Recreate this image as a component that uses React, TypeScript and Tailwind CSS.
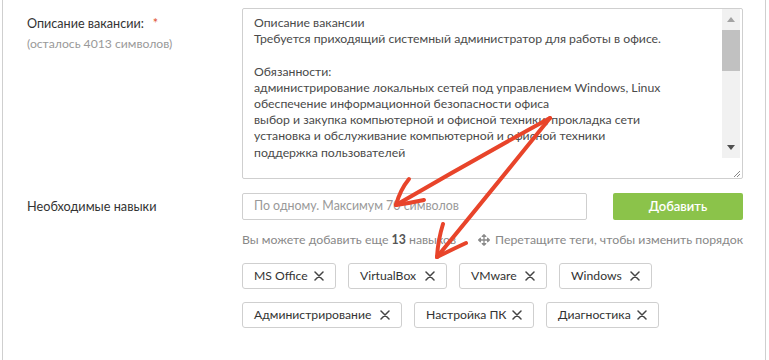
import React from "react";
import { FaArrowsAlt } from "react-icons/fa";

const font = { fontFamily: "Lato, 'Noto Sans', sans-serif" };

function XIcon() {
  return (
    <svg width="10" height="10" viewBox="0 0 10 10" className="shrink-0">
      <path d="M1 1 L9 9 M9 1 L1 9" stroke="#444" strokeWidth="1.5" strokeLinecap="round" />
    </svg>
  );
}

function Tag({ label, w }: { label: string; w: string }) {
  return (
    <div className={`h-[26px] ${w} border border-[#cfcfcf] rounded-[3px] flex items-center justify-between pl-[11px] pr-[11px] text-[12.2px] text-[#333] whitespace-nowrap`}>
      <span>{label}</span>
      <XIcon />
    </div>
  );
}

const lines = [
  "Описание вакансии",
  "Требуется приходящий системный администратор для работы в офисе.",
  "",
  "Обязанности:",
  "администрирование локальных сетей под управлением Windows, Linux",
  "обеспечение информационной безопасности офиса",
  "выбор и закупка компьютерной и офисной техники, прокладка сети",
  "установка и обслуживание компьютерной и офисной техники",
  "поддержка пользователей",
];

export default function App() {
  return (
    <div className="relative w-[769px] h-[360px] bg-white overflow-hidden" style={font}>
      <div className="ml-[2px] w-[764px] h-[360px] border-l border-r border-[#cfcfcf] pl-[24px] pr-[21px] pt-[8px]">
        {/* Row 1 */}
        <div className="flex">
          <div className="w-[215px] pt-[7px]">
            <div className="text-[12.6px] leading-[18px] text-[#333] whitespace-nowrap">
              Описание вакансии:<span className="ml-[9px] text-[#e0502a]">*</span>
            </div>
            <div className="mt-[2px] text-[12.2px] leading-[18px] text-[#999] whitespace-nowrap">(осталось 4013 символов)</div>
          </div>
          <div className="w-[501px] h-[171px] border border-[#cfcfcf] rounded-[2px] flex overflow-hidden">
            <div className="flex-1 pl-[11px] pt-[6px] text-[12.25px] leading-[16.2px] text-[#4a4a4a] overflow-hidden">
              {lines.map((l, i) => (
                <div key={i} className="whitespace-nowrap h-[16.2px]">{l}</div>
              ))}
            </div>
            <div className="w-[18px] mr-[2px] flex flex-col">
              <div className="h-[149px] bg-[#f1f1f1] flex flex-col">
                <div className="h-[21px] flex items-center justify-center">
                  <svg width="8" height="5" viewBox="0 0 8 5"><path d="M0 5 L4 0 L8 5 Z" fill="#a3a3a3" /></svg>
                </div>
                <div className="h-[41px] bg-[#c1c1c1]" />
                <div className="flex-1" />
                <div className="h-[22px] flex items-center justify-center">
                  <svg width="8" height="5" viewBox="0 0 8 5"><path d="M0 0 L8 0 L4 5 Z" fill="#505050" /></svg>
                </div>
              </div>
              <div className="flex-1 flex items-end justify-end pb-[1px] pr-[0px]">
                <svg width="7" height="7" viewBox="0 0 7 7">
                  <path d="M1 7 L7 1 M4 7 L7 4" stroke="#888" strokeWidth="1" />
                </svg>
              </div>
            </div>
          </div>
        </div>

        {/* Row 2 */}
        <div className="flex items-center mt-[14px]">
          <div className="w-[215px] text-[12.7px] text-[#333] whitespace-nowrap">Необходимые навыки</div>
          <div className="w-[345px] h-[27px] border border-[#cfcfcf] rounded-[2px] flex items-center pl-[11px] text-[12.4px] text-[#999] whitespace-nowrap">
            По одному. Максимум 70 символов
          </div>
          <div className="ml-[26px] w-[130px] h-[27px] rounded-[2px] bg-[#8bc34a] flex items-center justify-center text-white text-[13px] font-semibold">
            Добавить
          </div>
        </div>

        {/* helper */}
        <div className="ml-[215px] w-[501px] mt-[12px] flex justify-between items-center text-[12.3px] leading-[16px] text-[#888] whitespace-nowrap">
          <div>
            Вы можете добавить еще <span className="font-bold text-[#555]">13</span> навыков
          </div>
          <div className="flex items-center gap-[5px]">
            <FaArrowsAlt size={12} color="#8a8a8a" />
            <span>Перетащите теги, чтобы изменить порядок</span>
          </div>
        </div>

        {/* tags */}
        <div className="ml-[215px] mt-[15px] flex flex-col gap-[13px]">
          <div className="flex gap-[12px]">
            <Tag label="MS Office" w="w-[94px]" />
            <Tag label="VirtualBox" w="w-[99px]" />
            <Tag label="VMware" w="w-[88px]" />
            <Tag label="Windows" w="w-[93px]" />
          </div>
          <div className="flex gap-[12px]">
            <Tag label="Администрирование" w="w-[160px]" />
            <Tag label="Настройка ПК" w="w-[120px]" />
            <Tag label="Диагностика" w="w-[113px]" />
          </div>
        </div>
      </div>

      {/* arrows */}
      <svg className="absolute inset-0 pointer-events-none" width="769" height="360" viewBox="0 0 769 360">
        <g stroke="#e8442a" strokeWidth="4" strokeLinecap="round" fill="none">
          <path d="M550 118 Q470 162 396 205" />
          <path d="M396 205 Q400 190 409 179" />
          <path d="M396 205 Q410 203 424 200" />
          <path d="M550 118 Q492 190 437 257" />
          <path d="M437 257 Q438 240 443 224" />
          <path d="M437 257 Q451 250 466 243" />
        </g>
      </svg>
    </div>
  );
}
